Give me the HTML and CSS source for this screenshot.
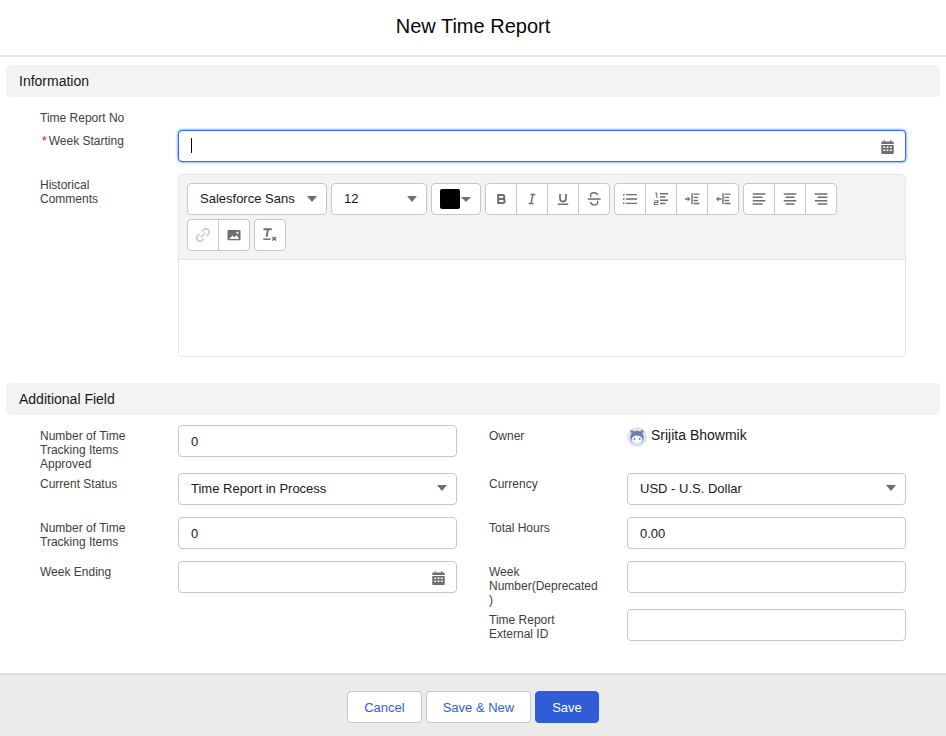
FILE: index.html
```html
<!DOCTYPE html>
<html lang="en">
<head>
<meta charset="utf-8">
<title>New Time Report</title>
<link rel="stylesheet" href="styles.css">
</head>
<body>
<header class="modal-header"><h1 class="modal-title">New Time Report</h1></header>
<main class="modal-body">
  <section class="section">
    <h2 class="section-title">Information</h2>
    <div class="section-body">
      <div class="field field-readonly">
        <div class="label">Time Report No</div>
        <div></div>
      </div>
      <div class="field">
        <div class="label label-required"><span class="asterisk">*</span>Week Starting</div>
        <div class="input input-focus"><span class="caret"></span>
          <svg class="cal-icon" viewBox="0 0 14 14" preserveAspectRatio="none"><use href="#i-cal"/></svg>
        </div>
      </div>
      <div class="field">
        <div class="label">Historical Comments</div>
        <div class="editor">
          <div class="toolbar">
            <div class="tool-select tool-font">Salesforce Sans<span class="arrow"></span></div>
            <div class="tool-select tool-size">12<span class="arrow"></span></div>
            <div class="tool-color"><span class="swatch"></span><span class="arrow arrow-small"></span></div>
            <div class="tool-group">
              <button class="tool-btn"><svg class="tool-icon" viewBox="0 0 16 16"><path d="M5.200 4H9.300a2 2 0 0 1 0 4H5.200zM5.200 8h4.500a2 2 0 0 1 0 4H5.200z" fill="none" stroke="#706e6b" stroke-width="2"/></svg></button>
              <button class="tool-btn"><svg class="tool-icon" viewBox="0 0 16 16"><path d="M6.500 3.600H11.300M4.700 12.400H9.500M8.900 3.600 7.100 12.400" fill="none" stroke="#706e6b" stroke-width="1.500"/></svg></button>
              <button class="tool-btn"><svg class="tool-icon" viewBox="0 0 16 16"><path d="M5 3v4.600a3 3 0 0 0 6 0V3" fill="none" stroke="#706e6b" stroke-width="1.700"/><rect x="2.800" y="12.500" width="10.400" height="1.500" fill="#706e6b"/></svg></button>
              <button class="tool-btn"><svg class="tool-icon" viewBox="0 0 16 16"><path d="M11.800 3.800C11 2.500 9.800 1.800 8 1.800 5.800 1.800 4.500 3 4.500 4.500c0 .7.300 1.300.8 1.800M4.400 11c.6 1.800 1.900 2.900 3.700 2.900 2.200 0 3.600-1.100 3.600-2.700 0-.5-.1-.9-.4-1.300" fill="none" stroke="#706e6b" stroke-width="1.400"/><rect x="1.700" y="7.300" width="13" height="1.500" fill="#706e6b"/></svg></button>
            </div>
            <div class="tool-group">
              <button class="tool-btn"><svg class="tool-icon" viewBox="0 0 16 16"><path d="M4 3.700H15M4 8H15M4 12.300H15" stroke="#706e6b" stroke-width="1.300"/><path d="M1 3.700h1.600M1 8h1.600M1 12.300h1.600" stroke="#706e6b" stroke-width="1.400"/></svg></button>
              <button class="tool-btn"><svg class="tool-icon" viewBox="0 0 16 16"><path d="M7 2.700h8M7 6h5.500M7 9.200h8M7 12.500h5.500" stroke="#706e6b" stroke-width="1.500"/><path d="M2.200 2.200h1.600V7M1.400 9.700h3.600v1.800H1.400v2h3.800" fill="none" stroke="#706e6b" stroke-width="1.100"/></svg></button>
              <button class="tool-btn"><svg class="tool-icon" viewBox="0 0 16 16"><path d="M1 8h3.200" stroke="#706e6b" stroke-width="1.500"/><path d="M3.600 5.500 6.400 8 3.600 10.500z" fill="#706e6b"/><path d="M8 2.300v11" stroke="#706e6b" stroke-width="1.400"/><path d="M9.500 3.200h6M9.500 6.300h4.500M9.500 9.500h4.500M9.500 12.500h6" stroke="#706e6b" stroke-width="1.300"/></svg></button>
              <button class="tool-btn"><svg class="tool-icon" viewBox="0 0 16 16"><path d="M3.500 8H6.500" stroke="#706e6b" stroke-width="1.500"/><path d="M3.800 5.500 1 8 3.800 10.500z" fill="#706e6b"/><path d="M8 2.300v11" stroke="#706e6b" stroke-width="1.400"/><path d="M9.500 3.200h6M9.500 6.300h4.500M9.500 9.500h4.500M9.500 12.500h6" stroke="#706e6b" stroke-width="1.300"/></svg></button>
            </div>
            <div class="tool-group">
              <button class="tool-btn"><svg class="tool-icon" viewBox="0 0 16 16"><path d="M1.700 3h12.600M1.700 6.300h9.800M1.700 9.700h12.600M1.700 13h9.800" stroke="#706e6b" stroke-width="1.600"/></svg></button>
              <button class="tool-btn"><svg class="tool-icon" viewBox="0 0 16 16"><path d="M1.700 3h12.600M3.500 6.300h9M1.700 9.700h12.600M3.500 13h9" stroke="#706e6b" stroke-width="1.600"/></svg></button>
              <button class="tool-btn"><svg class="tool-icon" viewBox="0 0 16 16"><path d="M1.700 3h12.600M4.500 6.300h9.800M1.700 9.700h12.600M4.500 13h9.800" stroke="#706e6b" stroke-width="1.600"/></svg></button>
            </div>
            <div class="tool-group">
              <button class="tool-btn"><svg class="tool-icon" viewBox="0 0 16 16"><path d="M6.300 9.700 9.700 6.300M7.500 4 9 2.500a3.200 3.200 0 0 1 4.500 4.500L12 8.500M8.500 12 7 13.500A3.200 3.200 0 0 1 2.500 9L4 7.500" fill="none" stroke="#c9c7c5" stroke-width="1.500" stroke-linecap="round"/></svg></button>
              <button class="tool-btn"><svg class="tool-icon" viewBox="0 0 16 16"><path fill-rule="evenodd" fill="#706e6b" d="M2.500 3h11a1 1 0 0 1 1 1v8.300a1 1 0 0 1-1 1h-11a1 1 0 0 1-1-1V4a1 1 0 0 1 1-1zM3 12h10.200L10.500 8 8.600 10.500 6.500 8.500zM11.500 4.500a1.100 1.100 0 1 0 .01 0z"/></svg></button>
            </div>
            <button class="tool-btn tool-single"><svg class="tool-icon" viewBox="0 0 16 16"><path d="M1.500 2.200h8.200M6 2.200 4.600 9.800" fill="none" stroke="#706e6b" stroke-width="1.900"/><rect x="1.300" y="11.400" width="7.400" height="1.500" fill="#706e6b"/><path d="M10.300 10l3.800 3.500M14.100 10l-3.800 3.500" stroke="#706e6b" stroke-width="1.500"/></svg></button>
          </div>
          <div class="editor-body"></div>
        </div>
      </div>
    </div>
  </section>
  <section class="section">
    <h2 class="section-title">Additional Field</h2>
    <div class="section-body two-col">
      <div class="field">
        <div class="label">Number of Time Tracking Items Approved</div>
        <input class="input" type="text" value="0">
      </div>
      <div class="field">
        <div class="label">Owner</div>
        <div class="owner">
          <svg class="avatar" viewBox="0 0 20 20">
            <circle cx="10" cy="10" r="10" fill="#dfe6f1"/>
            <circle cx="5" cy="4.500" r="1.600" fill="#6f7fa8"/>
            <circle cx="15" cy="4.500" r="1.600" fill="#6f7fa8"/>
            <circle cx="10" cy="10.500" r="6.800" fill="#6f7fa8"/>
            <ellipse cx="10" cy="12.700" rx="5.400" ry="4.200" fill="#f4f6fb"/>
            <path d="M7.300 12h.1M12.700 12h.1" stroke="#4a5a80" stroke-width="1.600" stroke-linecap="round"/>
          </svg>
          <span>Srijita Bhowmik</span>
        </div>
      </div>
      <div class="field">
        <div class="label">Current Status</div>
        <div class="input select">Time Report in Process<span class="arrow"></span></div>
      </div>
      <div class="field">
        <div class="label">Currency</div>
        <div class="input select">USD - U.S. Dollar<span class="arrow"></span></div>
      </div>
      <div class="field">
        <div class="label">Number of Time Tracking Items</div>
        <input class="input" type="text" value="0">
      </div>
      <div class="field">
        <div class="label">Total Hours</div>
        <input class="input" type="text" value="0.00">
      </div>
      <div class="field">
        <div class="label">Week Ending</div>
        <div class="input">
          <svg class="cal-icon" viewBox="0 0 14 14" preserveAspectRatio="none"><use href="#i-cal"/></svg>
        </div>
      </div>
      <div class="field">
        <div class="label">Week Number(Deprecated)</div>
        <input class="input" type="text">
      </div>
      <div class="field field-right">
        <div class="label">Time Report External ID</div>
        <input class="input" type="text">
      </div>
    </div>
  </section>
</main>
<footer class="modal-footer">
  <button class="btn">Cancel</button>
  <button class="btn">Save &amp; New</button>
  <button class="btn btn-brand">Save</button>
</footer>
<svg class="sprite" aria-hidden="true">
  <symbol id="i-cal" viewBox="0 0 14 14" preserveAspectRatio="none">
    <path fill="#706e6b" fill-rule="evenodd" d="M3 0h1v1.500h6V0h1v1.500h1.700a1 1 0 0 1 1 1V4H.300V2.500a1 1 0 0 1 1-1H3zM.300 5h13.400v8a1 1 0 0 1-1 1H1.300a1 1 0 0 1-1-1zM2.500 6.500v1.600h2V6.500zm3.500 0v1.600h2V6.500zm3.500 0v1.600h2V6.500zM2.500 9.500v1.600h2V9.500zm3.500 0v1.600h2V9.500zm3.500 0v1.600h2V9.500z"/>
  </symbol>
</svg>
</body>
</html>
```
FILE: styles.css
```css
* { box-sizing: border-box; }
html, body { height: 100%; }
body {
  margin: 0;
  display: flex;
  flex-direction: column;
  height: 100vh;
  overflow: hidden;
  background: #fff;
  font-family: "Liberation Sans", Arial, sans-serif;
  color: #080707;
}
.sprite { display: none; }

.modal-header {
  height: 57px;
  border-bottom: 2px solid #e5e5e5;
  display: flex;
  align-items: center;
  justify-content: center;
  padding-bottom: 3px;
  flex: none;
}
.modal-title { margin: 0; font-size: 20px; font-weight: 400; line-height: 25px; }

.modal-body { flex: 1; padding: 8px 6px 0; min-height: 0; }
.section { margin-bottom: 14px; }
.section-title {
  margin: 0;
  height: 32px;
  padding: 0 13px;
  background: #f3f3f3;
  border-radius: 4px;
  font-size: 14px;
  font-weight: 400;
  line-height: 32px;
  color: #181818;
}
.section-body { padding: 10px 34px 0; }
.two-col {
  display: grid;
  grid-template-columns: 1fr 1fr;
  column-gap: 32px;
  align-items: start;
}

.field { display: grid; grid-template-columns: 138px 1fr; }
.field-readonly { height: 23px; }
.field-right { grid-column: 2; }
.label {
  width: 110px;
  padding: 4px 0 2px;
  font-size: 12px;
  line-height: 14px;
  color: #3e3e3c;
  overflow-wrap: break-word;
}
.label-required { padding-left: 2px; }
.asterisk { color: #ea001e; margin-right: 2px; }

.input {
  position: relative;
  display: block;
  width: 100%;
  height: 32px;
  margin: 0 0 12px;
  padding: 0 12px;
  background: #fff;
  border: 1px solid #c9c7c5;
  border-radius: 4px;
  font-family: inherit;
  font-size: 13px;
  line-height: 30px;
  color: #181818;
}
.input-focus {
  border-color: #2f6bf0;
  box-shadow: 0 0 3px #2f6bf0;
}
.caret {
  position: absolute;
  left: 12px;
  top: 7px;
  width: 1px;
  height: 15px;
  background: #080707;
}
.cal-icon {
  position: absolute;
  right: 11px;
  top: 9px;
  width: 13px;
  height: 14px;
}
.arrow {
  width: 0;
  height: 0;
  border-left: 5px solid transparent;
  border-right: 5px solid transparent;
  border-top: 6px solid #706e6b;
}
.select .arrow { position: absolute; right: 9px; top: 11px; }

.owner {
  display: flex;
  align-items: flex-start;
  gap: 4px;
  padding-top: 2px;
  font-size: 14px;
  line-height: 16px;
  color: #181818;
}
.avatar { width: 20px; height: 20px; flex: none; }

.editor {
  margin-bottom: 12px;
  border: 1px solid #e5e5e5;
  border-radius: 4px;
  overflow: hidden;
}
.toolbar {
  display: flex;
  flex-wrap: wrap;
  gap: 4px;
  padding: 8px;
  background: #f3f3f3;
  border-bottom: 1px solid #e5e5e5;
}
.editor-body { height: 96px; background: #fff; }
.tool-select {
  height: 32px;
  display: flex;
  align-items: center;
  justify-content: space-between;
  padding: 0 9px 1px 12px;
  background: #fff;
  border: 1px solid #c9c7c5;
  border-radius: 4px;
  font-size: 13px;
  color: #181818;
}
.tool-select .arrow { margin-top: 1px; }
.tool-font { width: 140px; }
.tool-size { width: 96px; }
.tool-color {
  width: 50px;
  height: 32px;
  display: flex;
  align-items: center;
  padding-left: 8px;
  gap: 1px;
  background: #fff;
  border: 1px solid #c9c7c5;
  border-radius: 4px;
}
.swatch { width: 20px; height: 20px; background: #000; border-radius: 2px; }
.arrow-small {
  border-left-width: 5px;
  border-right-width: 5px;
  border-top-width: 5px;
}
.tool-group {
  display: flex;
  height: 32px;
  background: #fff;
  border: 1px solid #c9c7c5;
  border-radius: 4px;
}
.tool-btn {
  width: 31px;
  padding: 0;
  display: flex;
  align-items: center;
  justify-content: center;
  background: none;
  border: 0;
  border-left: 1px solid #c9c7c5;
}
.tool-btn:first-child { width: 30px; border-left: 0; }
.tool-single {
  width: 32px;
  height: 32px;
  background: #fff;
  border: 1px solid #c9c7c5;
  border-radius: 4px;
}
.tool-icon { width: 16px; height: 16px; }

.modal-footer {
  flex: none;
  height: 63px;
  display: flex;
  justify-content: center;
  align-items: flex-start;
  gap: 4px;
  padding-top: 16px;
  background: #ecebea;
  border-top: 2px solid #e0dfde;
}
.btn {
  height: 32px;
  padding: 0 16px;
  background: #fff;
  border: 1px solid #c9c7c5;
  border-radius: 4px;
  font-family: inherit;
  font-size: 13px;
  color: #2f5fdb;
}
.btn-brand { background: #305cd8; border-color: #305cd8; color: #fff; }
```
